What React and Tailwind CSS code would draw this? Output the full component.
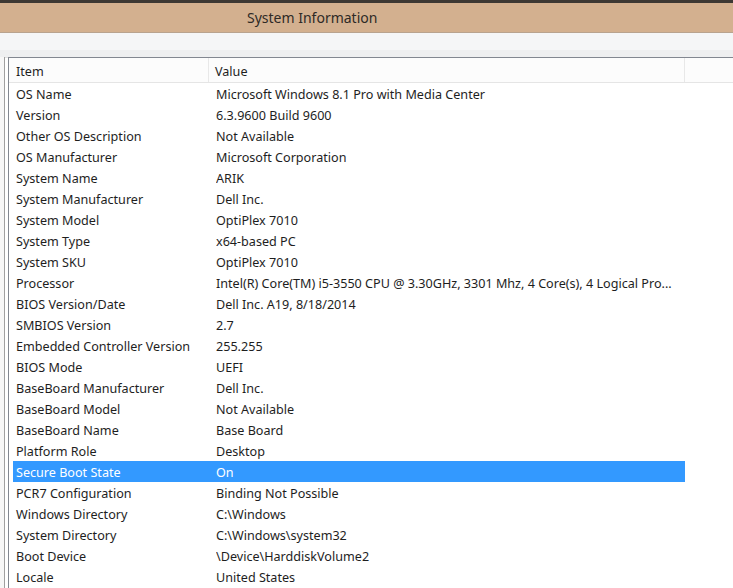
import React from "react";

const rows = [
  ["OS Name", "Microsoft Windows 8.1 Pro with Media Center"],
  ["Version", "6.3.9600 Build 9600"],
  ["Other OS Description", "Not Available"],
  ["OS Manufacturer", "Microsoft Corporation"],
  ["System Name", "ARIK"],
  ["System Manufacturer", "Dell Inc."],
  ["System Model", "OptiPlex 7010"],
  ["System Type", "x64-based PC"],
  ["System SKU", "OptiPlex 7010"],
  ["Processor", "Intel(R) Core(TM) i5-3550 CPU @ 3.30GHz, 3301 Mhz, 4 Core(s), 4 Logical Pro..."],
  ["BIOS Version/Date", "Dell Inc. A19, 8/18/2014"],
  ["SMBIOS Version", "2.7"],
  ["Embedded Controller Version", "255.255"],
  ["BIOS Mode", "UEFI"],
  ["BaseBoard Manufacturer", "Dell Inc."],
  ["BaseBoard Model", "Not Available"],
  ["BaseBoard Name", "Base Board"],
  ["Platform Role", "Desktop"],
  ["Secure Boot State", "On"],
  ["PCR7 Configuration", "Binding Not Possible"],
  ["Windows Directory", "C:\\Windows"],
  ["System Directory", "C:\\Windows\\system32"],
  ["Boot Device", "\\Device\\HarddiskVolume2"],
  ["Locale", "United States"],
];

export default function App() {
  return (
    <div
      className="w-[733px] h-[588px] overflow-hidden bg-white flex flex-col text-[#1e1e1e]"
      style={{ fontFamily: '"Noto Sans", "Open Sans", sans-serif' }}
    >
      <div className="h-[3px] bg-[#3d3833] shrink-0" />
      <div className="h-[30px] shrink-0 bg-[#d3b08f] border-b border-[#b8a38f] flex items-center pl-[247px]">
        <span className="text-[14px] text-[#2e2a26] leading-none">System Information</span>
      </div>
      <div className="h-[17px] shrink-0 bg-[#f5f6f7]" />
      <div className="h-[7px] shrink-0 bg-[#eeeff0]" />
      <div className="flex flex-1 min-h-0">
        <div className="w-[5px] shrink-0 border-r border-[#a0a0a0] bg-[#f7f7f7]" />
        <div className="w-[3px] shrink-0 bg-white border-t border-[#e0e0e0]" />
        <div className="flex-1 border-l border-t border-[#828790] flex flex-col">
          <div className="h-[25px] shrink-0 flex border-b border-[#e5e5e5] bg-[#fcfcfc] text-[12.6px]">
            <div className="w-[200px] border-r border-[#e8e8e8] flex items-center pl-[7px] pt-[4px]">Item</div>
            <div className="w-[476px] border-r border-[#e8e8e8] flex items-center pl-[6px] pt-[4px]">Value</div>
            <div className="flex-1" />
          </div>
          <div className="flex flex-col">
            {rows.map(([k, v]) => {
              const sel = k === "Secure Boot State";
              return (
                <div
                  key={k}
                  className={`h-[21px] shrink-0 flex items-center pt-[4px] text-[12.6px] w-[672px] ml-[4px] ${
                    sel ? "bg-[#3399ff] text-white" : ""
                  }`}
                >
                  <div className="w-[203px] shrink-0 pl-[3px] whitespace-nowrap overflow-hidden">{k}</div>
                  <div className="flex-1 whitespace-nowrap overflow-hidden">{v}</div>
                </div>
              );
            })}
          </div>
        </div>
      </div>
    </div>
  );
}
